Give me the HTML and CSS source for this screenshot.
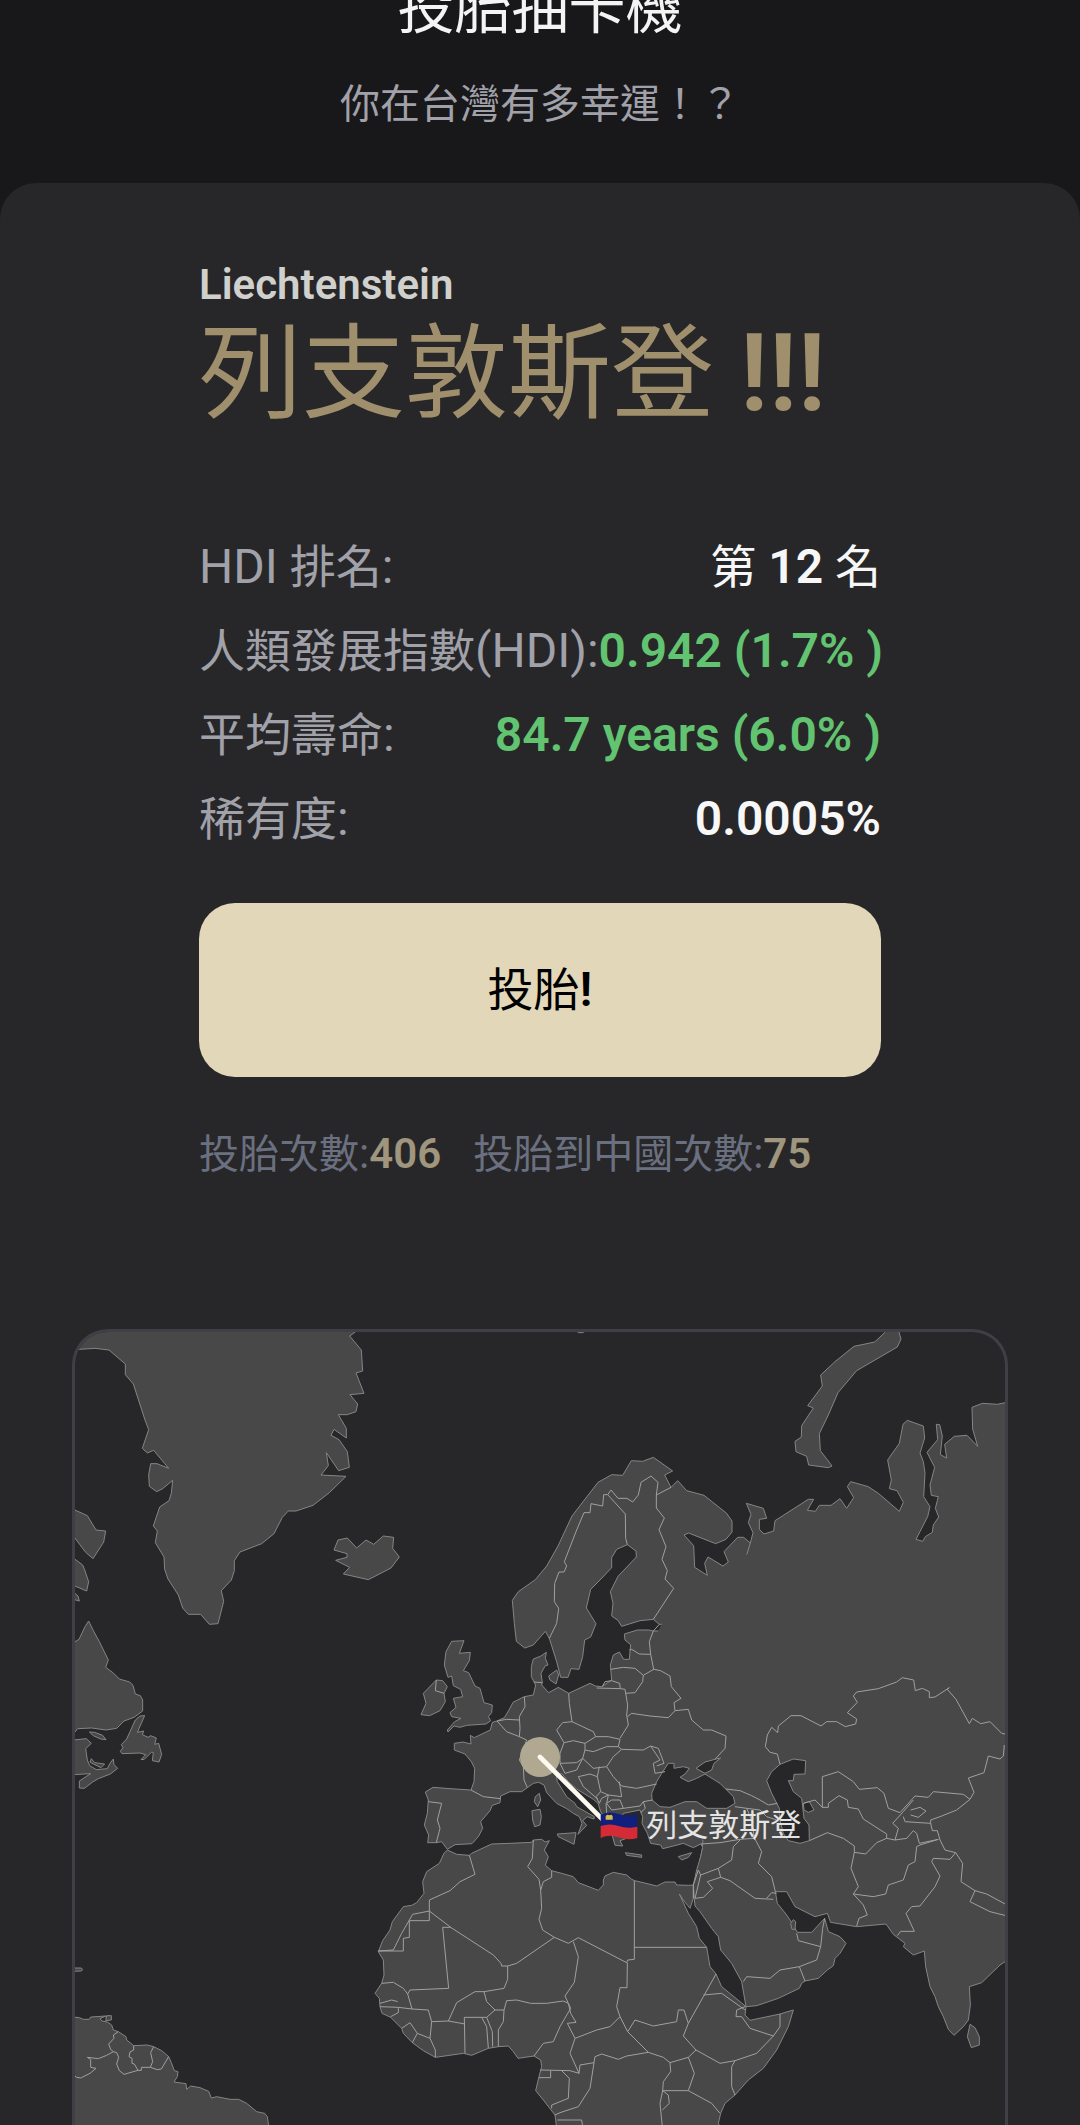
FILE: index.html
```html
<!DOCTYPE html>
<html lang="zh-Hant">
<head>
<meta charset="utf-8">
<meta name="viewport" content="width=device-width, initial-scale=1">
<title>投胎抽卡機</title>
<link rel="stylesheet" href="styles.css">
</head>
<body>
<header class="hero">
  <h1 class="hero-title">投胎抽卡機</h1>
  <p class="hero-subtitle">你在台灣有多幸運！？</p>
</header>
<main class="panel">
  <section class="result">
    <p class="country-en">Liechtenstein</p>
    <h2 class="country-name">列支敦斯登 <span class="marks">!!!</span></h2>
    <dl class="facts">
      <div class="fact"><dt><span class="latin">HDI </span>排名<span class="latin">:</span></dt><dd>第<span class="latin"> 12 </span>名</dd></div>
      <div class="fact"><dt>人類發展指數<span class="latin">(HDI):</span></dt><dd class="good"><span class="latin">0.942 (1.7% )</span></dd></div>
      <div class="fact"><dt>平均壽命<span class="latin">:</span></dt><dd class="good"><span class="latin">84.7 years (6.0% )</span></dd></div>
      <div class="fact"><dt>稀有度<span class="latin">:</span></dt><dd><span class="latin">0.0005%</span></dd></div>
    </dl>
    <button class="draw" type="button">投胎<span class="latin">!</span></button>
    <p class="counts">
      <span>投胎次數<span class="count-latin">:<b>406</b></span></span>
      <span>投胎到中國次數<span class="count-latin">:<b>75</b></span></span>
    </p>
  </section>
  <section class="map">
    <svg class="map-canvas" viewBox="45 36 2790 2379" role="img" aria-label="列支敦斯登">
      <!-- North Atlantic -->
      <g class="land">
        <path d="M30,88 58,88 105,85 147,90 196,132 196,164 220,192 255,300 266,329 247,385 262,399 281,391 326,445 291,431 272,431 266,465 268,499 290,515 308,506 338,481 334,520 327,542 299,561 280,618 292,633 286,668 312,711 314,748 324,777 355,825 368,864 385,883 422,883 448,913 474,911 491,844 484,812 514,780 523,752 523,722 540,696 605,671 642,641 667,592 685,573 708,573 759,556 808,518 858,469 783,465 805,437 799,398 836,452 868,442 862,395 837,359 813,346 822,328 859,354 859,325 835,284 862,284 888,275 893,252 870,224 912,220 888,159 908,153 904,90 869,48 886,36 886,20 30,20z"/>
        <path d="M822,690 834,660 862,654 890,684 918,660 941,673 970,648 1001,652 998,685 1018,711 993,744 925,779 850,762 869,742 827,721 861,712 861,701z"/>
        <path d="M40,568 82,587 108,630 137,633 131,666 99,716 77,697 40,648zM40,714 68,735 74,750 86,785 80,813 40,796zM40,816 54,828 58,843 40,838z"/>
        <path d="M1544,30 1556,38 1568,38 1582,30z"/>
      </g>
      <!-- Labrador and the north of South America -->
      <g class="land" transform="translate(0 840)">
        <path d="M40,128 57,118 75,80 86,63 100,92 118,125 145,180 137,202 160,219 178,237 209,246 219,256 226,282 241,287 248,300 248,333 222,352 192,363 170,385 138,390 95,384 53,386 40,402z"/>
        <path d="M40,420 79,416 94,430 77,446 82,480 89,497 109,509 142,506 150,490 160,477 162,494 173,505 151,522 115,536 98,546 73,565 58,564 58,543 92,521 40,524z"/>
        <path d="M94,476 104,488 134,492 123,503 96,490 90,486zM88,396 104,397 128,406 138,419 122,417 100,407z"/>
        <path d="M254,347 240,348 226,360 210,395 200,417 184,434 189,443 181,454 186,461 240,459 257,464 243,479 253,478 275,456 280,458 277,482 297,486 305,463 296,430 284,433 289,414 272,407 264,412 247,404 251,393 232,397z"/>
        <path d="M40,1104 64,1104 68,1109 64,1113 40,1114z"/>
        <path d="M40,1251 58,1253 70,1258 88,1258 92,1251 138,1248 120,1256 126,1263 142,1266 155,1275 160,1290 175,1295 198,1310 200,1320 221,1337 262,1335 281,1340 305,1352 326,1370 334,1388 343,1412 354,1415 352,1430 342,1446 378,1451 380,1468 392,1458 420,1463 446,1474 454,1494 470,1490 510,1498 536,1498 560,1510 590,1535 614,1540 622,1550 629,1600 40,1600zM140,1247 154,1247 154,1260 137,1262z"/>
        <path class="border" d="M175,1295 160,1305 162,1315 146,1332 152,1348 160,1355 140,1366 115,1376 82,1372 92,1378 92,1402 108,1405 96,1415 90,1420 62,1434 50,1432 40,1424M160,1355 170,1358 176,1372 170,1392 178,1412 192,1423 234,1411 223,1392 216,1390 216,1375 207,1370 210,1356 221,1350 221,1337M234,1411 244,1411 244,1402 271,1402 278,1385 272,1358 281,1340M271,1402 292,1409 304,1407 326,1370"/>
      </g>
      <!-- Africa -->
      <g class="land" transform="translate(900 1500)">
        <path d="M1000,195 985,196 950,195 945,186 915,186 890,198 858,190 824,182 815,178 800,165 760,157 735,168 730,180 730,195 715,211 655,188 640,170 605,160 575,152 556,136 565,110 553,90 568,62 556,66 545,58 520,60 515,67 450,70 395,72 335,100 328,106 290,103 262,90 252,100 238,130 200,155 188,185 192,220 170,248 155,256 130,260 97,305 90,330 68,362 55,395 70,420 72,465 65,490 45,520 58,535 60,560 66,580 92,592 125,625 130,640 157,668 190,692 226,712 310,700 335,706 385,685 415,680 445,678 460,695 474,715 522,708 542,720 545,740 537,770 527,812 550,840 585,885 592,940 1090,940 1075,910 1082,880 1095,850 1125,825 1165,780 1210,745 1250,690 1285,620 1300,570 1260,582 1170,601 1155,585 1158,560 1140,545 1085,500 1068,462 1050,440 1040,382 1018,355 1010,320 985,280 958,222 970,240 990,265 1000,235z"/>
      </g>
      <!-- Eurasia -->
      <g class="land" transform="translate(900 300)">
        <path d="M1300,613 898,613 880,598 840,602 785,619 774,601 755,588 759,550 751,515 774,469 829,411 828,393 802,374 770,388 755,413 755,443 720,480 692,508 679,564 708,611 692,651 674,660 668,710 657,748 633,746 624,772 602,772 590,725 568,655 556,634 520,675 494,684 469,664 463,610 457,541 475,515 526,479 560,438 594,378 636,288 714,187 755,164 788,166 814,122 848,124 880,112 938,153 914,165 933,202 953,182 980,212 1032,226 1100,280 1116,303 1116,336 1098,358 1067,371 986,339 972,345 1001,377 1004,442 1042,466 1034,430 1044,411 1089,438 1105,426 1092,395 1133,352 1151,352 1171,369z"/>
        <path d="M1200,633 880,633 866,630 832,630 793,642 795,660 812,674 808,718 791,718 778,696 760,705 751,735 755,780 725,800 706,798 690,790 626,820 595,802 566,818 545,795 547,788 543,760 556,737 564,735 556,715 559,697 541,709 520,717 514,740 514,770 522,786 527,795 520,825 493,830 459,847 447,870 433,893 411,903 397,907 391,930 343,953 331,946 333,972 309,966 283,970 283,990 315,1002 334,1025 344,1045 342,1085 333,1110 270,1106 219,1102 196,1116 205,1140 202,1180 193,1215 206,1245 203,1268 229,1268 245,1265 262,1288 285,1274 336,1271 355,1250 368,1225 362,1205 390,1172 397,1156 420,1148 422,1128 450,1115 485,1115 502,1103 520,1090 536,1087 552,1095 560,1118 590,1150 620,1166 640,1180 658,1190 666,1210 654,1243 680,1216 668,1202 682,1190 702,1197 703,1190 650,1160 645,1150 620,1130 592,1085 588,1060 607,1062 625,1085 650,1107 700,1138 714,1150 722,1175 735,1195 755,1240 765,1276 788,1278 780,1262 800,1255 796,1230 780,1205 790,1180 840,1170 848,1190 846,1210 862,1240 872,1270 902,1275 908,1286 940,1278 970,1270 1000,1283 1022,1272 1028,1282 1020,1320 1400,1320 1400,633z"/>
        <path d="M275,664 312,662 298,700 331,697 328,722 310,752 326,758 345,798 360,805 372,848 397,855 395,878 385,890 392,902 378,912 320,916 300,922 282,918 264,936 262,930 284,905 303,895 275,890 270,878 288,862 280,835 308,830 302,808 280,797 275,768 264,772 253,735 258,695z"/>
        <path d="M229,780 248,782 262,800 252,820 256,845 240,872 209,887 183,884 198,850 190,820zM566,768 590,750 596,765 588,792 570,780z"/>
        <path d="M538,1120 542,1140 533,1160 523,1145 526,1130zM516,1172 540,1168 544,1190 540,1215 524,1220 518,1200zM592,1242 648,1238 642,1273 595,1250zM796,1298 845,1305 845,1312 800,1306zM955,1310 995,1298 985,1312 965,1320z"/>
      </g>
      <g class="land" transform="translate(2040 0)">
        <path d="M31,669 39,638 25,608 33,583 19,550 70,565 80,595 58,598 58,628 72,642 101,633 105,602 205,538 221,538 202,571 226,574 238,556 273,556 300,536 320,565 341,533 322,500 332,485 385,500 415,520 478,574 490,547 471,512 448,506 454,480 443,420 478,370 489,313 502,301 550,318 554,354 540,399 550,425 555,460 551,530 570,560 563,590 528,658 548,664 556,650 577,637 580,615 596,591 586,565 595,530 574,526 570,495 584,442 561,397 593,359 589,313 599,314 607,348 601,404 620,414 614,373 643,349 681,346 713,379 698,327 696,262 727,250 772,253 810,245 810,1100 -100,1100z"/>
        <path d="M436,30 436,36 404,66 342,79 285,125 242,165 247,198 203,257 220,264 185,317 184,351 165,364 168,395 200,409 206,435 265,443 276,438 241,392 238,341 265,285 294,218 350,152 472,81 483,57 475,30z"/>
      </g>
      <g class="land" transform="translate(2040 900)">
        <path d="M-112,682 -118,710 -130,750 -140,795 -137,835 -135,858 -120,875 -85,925 -65,950 -58,990 -25,1030 5,1085 18,1160 50,1157 115,1135 178,1105 185,1090 195,1083 235,1075 262,1050 280,1037 285,1015 300,1000 318,970 300,950 265,935 254,895 215,937 172,937 165,925 150,900 140,885 112,850 106,815 140,815 165,860 225,890 262,880 272,907 350,920 438,912 460,943 495,970 490,980 520,1005 553,993 557,1040 570,1100 585,1130 595,1160 610,1190 625,1228 642,1246 670,1220 685,1200 691,1155 688,1100 725,1088 780,1035 810,1015 820,300 -100,300z"/>
        <path d="M690,1213 705,1223 718,1250 718,1275 694,1283 682,1250zM160,899 167,905 165,928 156,928 152,910z"/>
      </g>
      <path class="interior" d="M1803,915 1880,850 1960,790 2065,700 2140,665 2840,680 2840,1850 2500,1780 2300,1700 2100,1700 1945,1650 1925,1625 1932,1560 1780,1540 1790,1490 1690,1440 1640,1350 1500,1180 1650,1120 1665,1050 1760,1010z"/>
      <!-- Black Sea, Azov and Caspian -->
      <g class="sea">
        <path transform="translate(900 300)" d="M942,1045 942,1030 925,1030 905,1060 890,1085 875,1120 876,1140 900,1160 930,1162 975,1145 1010,1145 1040,1165 1100,1165 1125,1150 1120,1130 1097,1107 1080,1090 1035,1062 1010,1075 985,1085 960,1072 975,1062 988,1045 970,1040zM1008,1045 1035,1060 1055,1050 1062,1030 1082,1014 1065,1018 1035,1026z"/>
        <path transform="translate(2040 900)" d="M120,433 160,417 197,422 195,462 162,463 160,482 145,482 160,515 185,535 188,560 192,595 207,615 208,662 180,670 145,662 130,640 120,600 118,565 95,520 80,482 95,455zM190,550 208,545 222,570 205,577 192,570z"/>
      </g>
      <!-- Borders: Europe -->
      <path class="border" transform="translate(900 300)" d="M568,655 590,610 596,565 583,545 584,490 597,456 612,456 620,438 613,425 650,330 672,278 690,278 693,251 728,258 731,224 743,224 753,210 774,235 801,235 818,246 835,225 843,187 873,168 894,187 889,225 933,202M743,224 796,282 797,355 802,374M889,225 889,264 913,294 897,329 918,380 906,418 922,452 915,477 941,505 880,598M898,613 880,633 868,665 872,703 838,702 815,688 808,690M872,703 881,748 850,766 825,745 790,742 752,748M850,766 848,785 825,818 797,820M755,782 779,790 781,806 710,804M727,800 735,785 755,782M781,806 795,808 803,855 800,885 805,915 780,955M881,748 902,752 930,768 934,800 963,835 942,848 945,872 925,893 870,888 815,880 802,890M945,872 985,868 995,900 1030,930 1055,930 1098,948 1095,985 1065,1018M626,820 628,850 636,905 668,920 700,935 707,950 745,950 780,958M636,905 608,908 590,930 612,968 640,962 675,970 707,950M675,970 675,990 700,995 740,980 775,980 780,958M675,990 668,1015 700,1045 740,1040 760,1010 785,988 775,980M612,968 600,1000 600,1030 650,1028 668,1015M785,988 850,990 872,978 900,1020 880,1030 885,1060 915,1055M740,1040 760,1070 785,1098 830,1105 890,1092M872,978 895,985 912,1030 890,1038M522,786 547,788M493,830 495,860 478,890 480,925 478,950 500,960M411,903 440,898 478,900M411,903 440,935 478,950M500,960 478,1020 490,1040 492,1080 502,1103M333,1110 370,1130 422,1136M205,1145 245,1150 232,1200 240,1225 229,1268M229,780 226,812 252,820M600,1030 615,1060 650,1050 668,1015M655,1070 690,1062 712,1070 718,1040M655,1070 670,1100 714,1138M712,1070 722,1115 745,1125 785,1130 778,1085M722,1115 708,1130 718,1150 725,1135 745,1125 740,1150 755,1170 790,1165 840,1158 850,1145 878,1140M740,1150 755,1140 780,1140 790,1165M738,1150 740,1180 730,1190M850,1145 856,1165 842,1178M1097,1107 1140,1112 1175,1127 1200,1140 1225,1155 1252,1150M1125,1160 1160,1165 1200,1170 1220,1190 1250,1200M1160,1165 1175,1200 1184,1260"/>
      <!-- Borders: Africa and Arabia -->
      <path class="border" transform="translate(900 1500)" d="M328,106 345,163 300,185 270,212 208,240 208,273 158,283 125,340 100,390 55,393 130,393 130,355 148,352 148,302 208,302 208,273 272,322 400,405 423,430 425,438 443,438 470,430 583,352 548,330 537,298 545,265 542,210 537,178 503,140 517,115 520,60M542,210 550,185 575,172 575,152M272,322 248,322 266,505 150,510 143,522 156,567M443,438 443,478 432,505 372,515M583,352 625,370 655,353 800,428 803,420 823,418 823,182M823,382 1040,382M802,428 801,503 780,503 770,560 780,590M640,365 655,410 643,487 615,528 625,550M432,570 440,542 470,540 512,550 560,550 610,543 625,550 632,565 600,620 580,665 550,670 522,708M65,490 100,487 130,505 143,522M60,550 95,540 113,545M60,560 115,562 156,567 205,570 215,605 265,603 315,612M265,603 290,548 345,515 372,515 380,545 405,570 380,592 313,592 315,700M365,592 380,620 385,685M380,592 397,635 398,680M405,570 432,570 430,605 415,630 415,680M115,562 115,578 92,590M125,625 150,608 172,640 157,668M172,640 210,655 215,605M210,655 226,690 226,712M625,550 632,580 648,607 622,610 645,655 710,630 750,620 780,590 803,635 865,697 800,708 775,718 725,702 705,710 702,728 660,735 657,760 630,700 645,655M657,760 630,752 540,750M537,773 572,773 572,752M605,752 628,775 625,835 575,855 575,865M585,885 600,878 655,860 690,805 702,728M592,900 665,900 668,920M803,635 825,600 880,618 950,605 955,570 972,570 985,610 970,648 1008,690 985,712 930,728 910,712 865,697M985,610 1030,530 1068,462M1030,525 1085,520 1155,570M1128,590 1130,570 1155,560M1128,590 1145,590 1170,625 1240,648 1190,700 1125,722 1080,730 1008,690M1260,582 1260,620 1240,648M1125,722 1115,740 1115,800 1125,825M985,712 1003,760 985,812 1055,850 1080,880M930,728 932,755 910,785 908,812 985,812M908,812 925,825 928,850 907,870M908,812 900,850 907,920M1000,235 1000,195 1015,150 1022,165 1075,145 1115,120 1120,80 1140,60M1075,145 1082,172 1110,182 1185,235 1240,238M1022,165 1005,235 1030,232 1058,205 1042,185 1082,172M1220,235 1235,218 1250,220M1150,485 1160,470 1230,475 1260,450 1318,440 1370,420 1382,380 1315,362 1310,340"/>
      <!-- Borders: Asia -->
      <path class="border" transform="translate(2040 900)" d="M120,433 112,402 90,397 76,380 82,345 95,322 113,338 115,318 153,287 183,287 243,318 260,305 290,305 316,320 347,312 350,297 322,278 352,247 340,228 350,216 415,206 470,186 487,173 521,180 526,212 547,205 568,215 568,233 585,231 628,203 622,208 648,238 688,311 697,295 722,311 750,305 785,340 810,345M793,375 790,408 780,417 745,408 732,458 685,474 702,517 690,538 670,523 580,515 565,532 525,528 480,578 445,565 432,520 412,503 358,508 340,485 295,455 247,470 247,562 265,562 265,550 297,527 322,540 325,562 355,567 370,597 440,642 440,655M190,550 225,540 247,562M208,662 262,638 310,655 343,678 343,697 377,702 410,668 440,655 465,660 500,655 520,632 530,640 538,670 595,658M465,660 475,625 458,610 490,575 520,540M512,570 540,562 558,573 535,592 512,585M490,590 495,605 572,610 577,632 592,632 600,660 615,690 647,698 668,730 663,785 705,812 740,822 810,860M690,538 650,570 600,590 572,600 572,610M595,658 540,675 530,680 525,725 505,735 490,780 445,795 437,822 400,830 340,822 355,800 333,745 343,697M340,822 370,855 382,885 357,895 350,918M472,947 482,934 523,934 498,880 515,860 540,858 585,800 600,768 575,725 580,715 630,718 647,698M705,812 690,845 750,875 810,890M-118,672 -60,668 0,658 44,655 65,695 55,730 95,770 106,815M178,1040 195,1083M242,980 248,925 254,895"/>
      <!-- Marker -->
      <circle class="marker" cx="1440" cy="1311" r="60"/>
      <path class="marker-line" d="M1440,1311 1628,1499"/>
      <g transform="translate(1622 1472)">
        <path fill="#10207c" d="M0,12Q27,0 54,10T110,11V50Q82,56 54,49T0,50z"/>
        <path fill="#d52b36" d="M0,46Q27,37 54,46T110,48V82Q82,90 54,80T0,82z"/>
        <path fill="#d9ba45" d="M15,16 20,12 26,14 32,12 36,16V27H15z"/>
      </g>
      <text class="marker-label" x="1759" y="1547">列支敦斯登</text>
    </svg>
  </section>
</main>
</body>
</html>
```
FILE: styles.css
```css
* {
  box-sizing: border-box;
}

body {
  margin: 0;
  background: #18181a;
  color: #f4f4f5;
  font-family: Roboto, "Noto Sans CJK TC", sans-serif;
  overflow-x: hidden;
}

h1,
h2,
p,
dl,
dd {
  margin: 0;
  font-weight: 400;
}

/* The page is shown slightly scrolled, so the title is cut by the top edge */
.hero {
  display: flex;
  flex-direction: column;
  gap: 18px;
  margin-top: -33px;
  padding-bottom: 42px;
  text-align: center;
}

.hero-title {
  font-size: 57px;
  line-height: 84px;
}

.hero-subtitle {
  color: #a1a1aa;
  font-size: 40px;
  line-height: 72px;
}

.panel {
  padding: 72px 72px 0;
  border-radius: 36px 36px 0 0;
  background: #272729;
}

.result {
  max-width: 682px;
  margin: 0 auto;
}

.country-en {
  color: #d0d0cc;
  font-size: 42px;
  font-weight: 600;
  line-height: 60px;
}

.country-name {
  color: #a08f6c;
  font-size: 103px;
  line-height: 120px;
  white-space: nowrap;
}

.marks {
  font-size: 108px;
  font-weight: 600;
  line-height: 1;
}

.facts {
  display: flex;
  flex-direction: column;
  gap: 12px;
  margin-top: 96px;
}

.fact {
  display: flex;
  justify-content: space-between;
  font-size: 46px;
  line-height: 72px;
  white-space: nowrap;
}

.fact dt {
  color: #a1a1aa;
}

.fact dd {
  color: #f7f7f7;
}

.fact .latin,
.draw .latin {
  font-size: 48px;
  line-height: 1;
}

.fact dd .latin,
.draw .latin {
  font-weight: 600;
}

.fact .good {
  color: #62c370;
}

.draw {
  display: block;
  width: 100%;
  margin-top: 48px;
  padding: 51px 36px;
  border: 0;
  border-radius: 36px;
  background: #e2d7b9;
  color: #000;
  font-family: inherit;
  font-size: 46px;
  line-height: 72px;
}

.counts {
  display: flex;
  gap: 32px;
  margin-top: 48px;
  color: #6b7080;
  font-size: 40px;
  line-height: 60px;
  white-space: nowrap;
}

.count-latin {
  font-size: 42px;
  line-height: 1;
}

.count-latin b {
  color: #a0957d;
  font-weight: 600;
}

.map {
  margin-top: 144px;
  border: 3px solid #3f3f46;
  border-bottom: 0;
  border-radius: 36px 36px 0 0;
  overflow: hidden;
}

.map-canvas {
  display: block;
  width: 100%;
  height: auto;
}

.land {
  fill: #484848;
  stroke: #858585;
  stroke-width: 3;
}

.interior {
  fill: #484848;
}

.sea {
  fill: #272729;
  stroke: #858585;
  stroke-width: 3;
}

.border {
  fill: none;
  stroke: #a0a0a0;
  stroke-width: 3;
  stroke-linejoin: round;
}

.marker {
  fill: #b1a892;
}

.marker-line {
  stroke: #fffaf0;
  stroke-width: 14;
  stroke-linecap: round;
}

.marker-label {
  fill: #e4e4e4;
  font-size: 93px;
}
```
